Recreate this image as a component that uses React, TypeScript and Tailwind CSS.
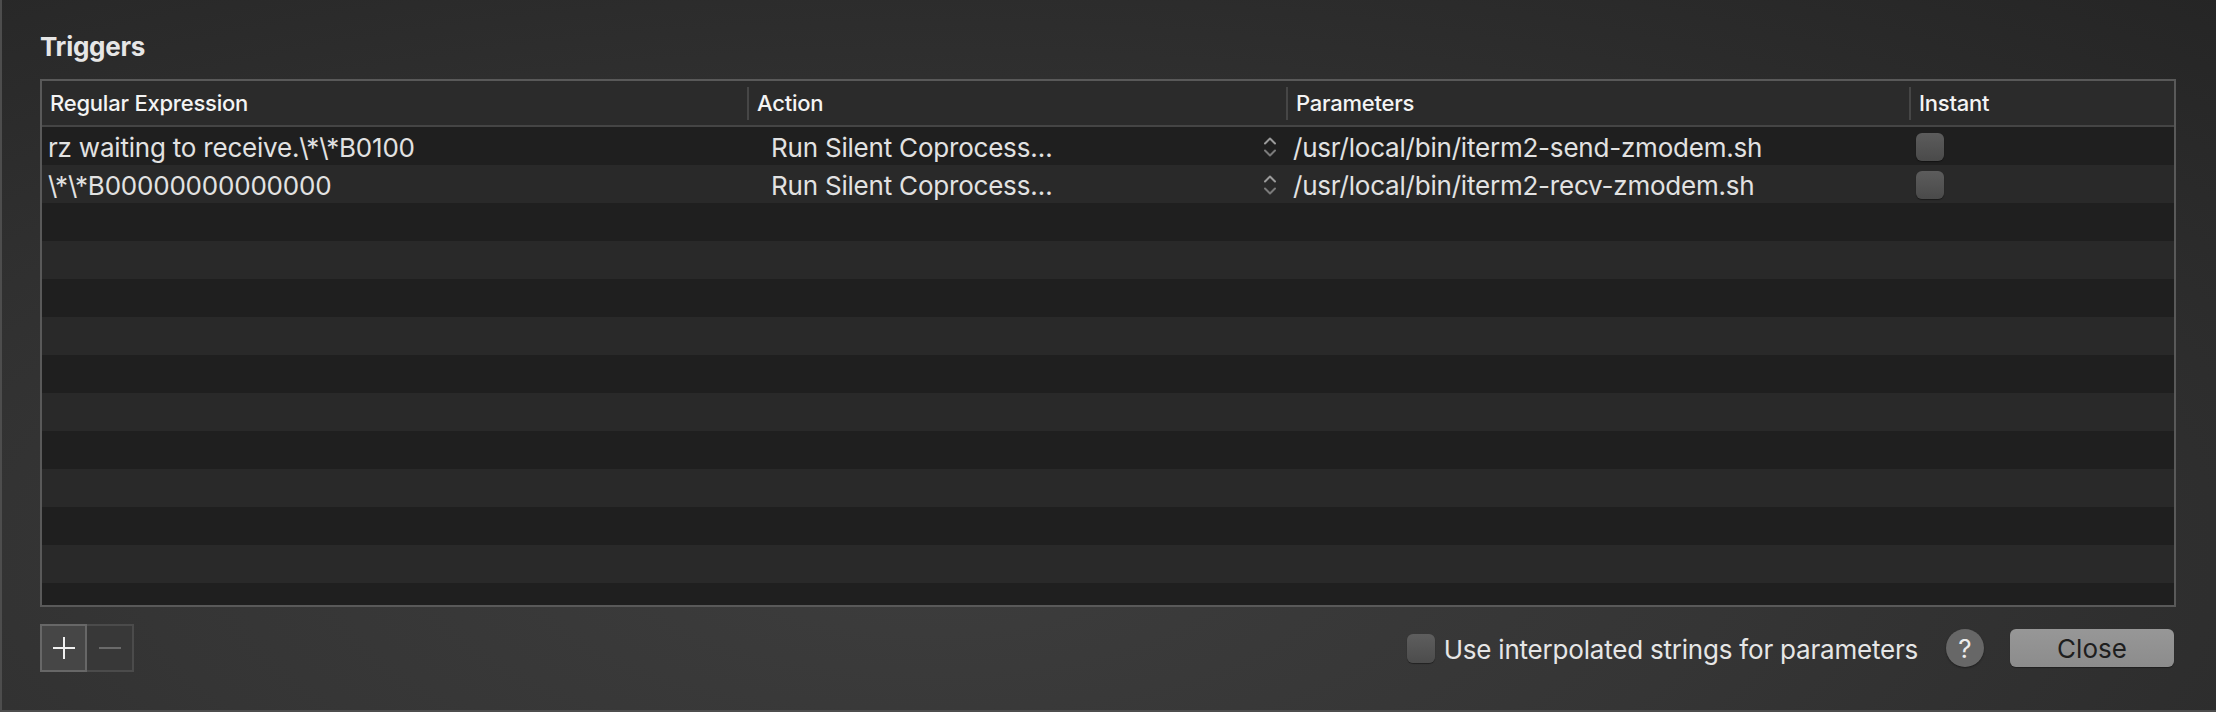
import React from "react";

type Trigger = {
    regex: string;
    action: string;
    params: string;
    instant: boolean;
};

const triggers: Trigger[] = [
    { regex: "rz waiting to receive.\\*\\*B0100", action: "Run Silent Coprocess…", params: "/usr/local/bin/iterm2-send-zmodem.sh", instant: false },
    { regex: "\\*\\*B00000000000000", action: "Run Silent Coprocess…", params: "/usr/local/bin/iterm2-recv-zmodem.sh", instant: false },
];

const TOTAL_ROWS = 13;

function PopupArrows() {
    return (
        <svg width="14" height="22" viewBox="0 0 14 22" fill="none">
            <path d="M2 7.5 L7 2.5 L12 7.5" stroke="#9a9a9a" strokeWidth="2" strokeLinecap="round" strokeLinejoin="round" />
            <path d="M2 14.5 L7 19.5 L12 14.5" stroke="#7a7a7a" strokeWidth="2" strokeLinecap="round" strokeLinejoin="round" />
        </svg>
    );
}

function CheckBox() {
    return <div className="w-[28px] h-[28px] rounded-[6px] bg-gradient-to-b from-[#5c5c5c] to-[#4a4a4a] shadow-[0_1px_1px_rgba(0,0,0,0.4)]" />;
}

function HeaderCell({ label, width, first }: { label: string; width: string; first?: boolean }) {
    return (
        <div className={`${width} flex items-center h-full`}>
            {!first && <span className="w-[2px] h-[33px] bg-[#464646]" />}
            <span className="pl-[8px]">{label}</span>
        </div>
    );
}

export default function App() {
    const rows = Array.from({ length: TOTAL_ROWS }, (_, i) => triggers[i] ?? null);

    return (
        <div
            className="w-[2216px] h-[712px] overflow-hidden flex flex-col pl-[38px] border-l-2 border-b-2 border-[#4d4d4d] bg-[radial-gradient(ellipse_90%_110%_at_42%_78%,#3d3d3d_0%,#353535_40%,#2b2b2b_75%,#242424_100%)] text-[#e2e2e2]"
            style={{ fontFamily: "Inter, 'Liberation Sans', sans-serif" }}
        >
            {/* Title */}
            <h1 className="mt-[31px] leading-[32px] text-[26px] font-bold text-[#e6e6e6] tracking-[-0.01em]">Triggers</h1>

            {/* Table */}
            <div className="mt-[16px] w-[2136px] h-[528px] border-2 border-[#595959] flex flex-col overflow-hidden">
                <div className="h-[46px] shrink-0 flex bg-[#2b2b2b] border-b-2 border-[#454545] text-[22px] font-medium text-[#f4f4f4] tracking-[-0.01em]">
                    <HeaderCell label="Regular Expression" width="w-[705px]" first />
                    <HeaderCell label="Action" width="w-[539px]" />
                    <HeaderCell label="Parameters" width="w-[623px]" />
                    <HeaderCell label="Instant" width="flex-1" />
                </div>

                <div className="flex-1 flex flex-col overflow-hidden text-[26px] tracking-[-0.008em]">
                    {rows.map((row, i) => (
                        <div key={i} className={`h-[38px] shrink-0 flex items-center ${i % 2 === 0 ? "bg-[#1f1f1f]" : "bg-[#292929]"}`}>
                            {row && (
                                <>
                                    <div className="w-[705px] pl-[6px] pt-[3px] whitespace-nowrap">{row.regex}</div>
                                    <div className="w-[539px] flex items-center pl-[24px] pr-[9px]">
                                        <span className="pt-[3px] whitespace-nowrap">{row.action}</span>
                                        <span className="ml-auto pt-[2px] flex items-center">
                                            <PopupArrows />
                                        </span>
                                    </div>
                                    <div className="w-[623px] pl-[7px] pt-[3px] whitespace-nowrap">{row.params}</div>
                                    <div className="flex-1 pl-[7px] pt-[1px] flex items-center">
                                        <CheckBox />
                                    </div>
                                </>
                            )}
                        </div>
                    ))}
                </div>
            </div>

            {/* Bottom bar */}
            <div className="mt-[17px] w-[2136px] h-[48px] flex items-center">
                <div className="flex h-[48px]">
                    <button className="w-[47px] h-[48px] bg-[#464646] border-2 border-[#676767] flex items-center justify-center">
                        <svg width="22" height="22" viewBox="0 0 22 22">
                            <path d="M0 11 H22 M11 0 V22" stroke="#f0f0f0" strokeWidth="2" />
                        </svg>
                    </button>
                    <button className="w-[47px] h-[48px] bg-[#383838] border-2 border-l-0 border-[#4b4b4b] flex items-center justify-center">
                        <svg width="22" height="22" viewBox="0 0 22 22">
                            <path d="M0 11 H22" stroke="#6a6a6a" strokeWidth="2" />
                        </svg>
                    </button>
                </div>

                <div className="flex-1" />

                <div className="w-[28px] h-[29px] rounded-[6px] bg-gradient-to-b from-[#5e5e5e] to-[#4c4c4c] shadow-[0_1px_1px_rgba(0,0,0,0.4)]" />
                <span className="ml-[9px] pt-[2px] text-[26px] text-[#e6e6e6] tracking-[-0.008em] whitespace-nowrap">Use interpolated strings for parameters</span>

                <div className="ml-[28px] w-[38px] h-[38px] rounded-full bg-[#676767] flex items-center justify-center text-[26px] text-[#ececec] shadow-[0_1px_2px_rgba(0,0,0,0.4)]">?</div>

                <button className="ml-[26px] mr-[2px] w-[164px] h-[38px] rounded-[6px] bg-gradient-to-b from-[#979797] to-[#8c8c8c] text-[26px] text-[#1e1e1e] shadow-[0_1px_1px_rgba(0,0,0,0.35)]">
                    Close
                </button>
            </div>
        </div>
    );
}
